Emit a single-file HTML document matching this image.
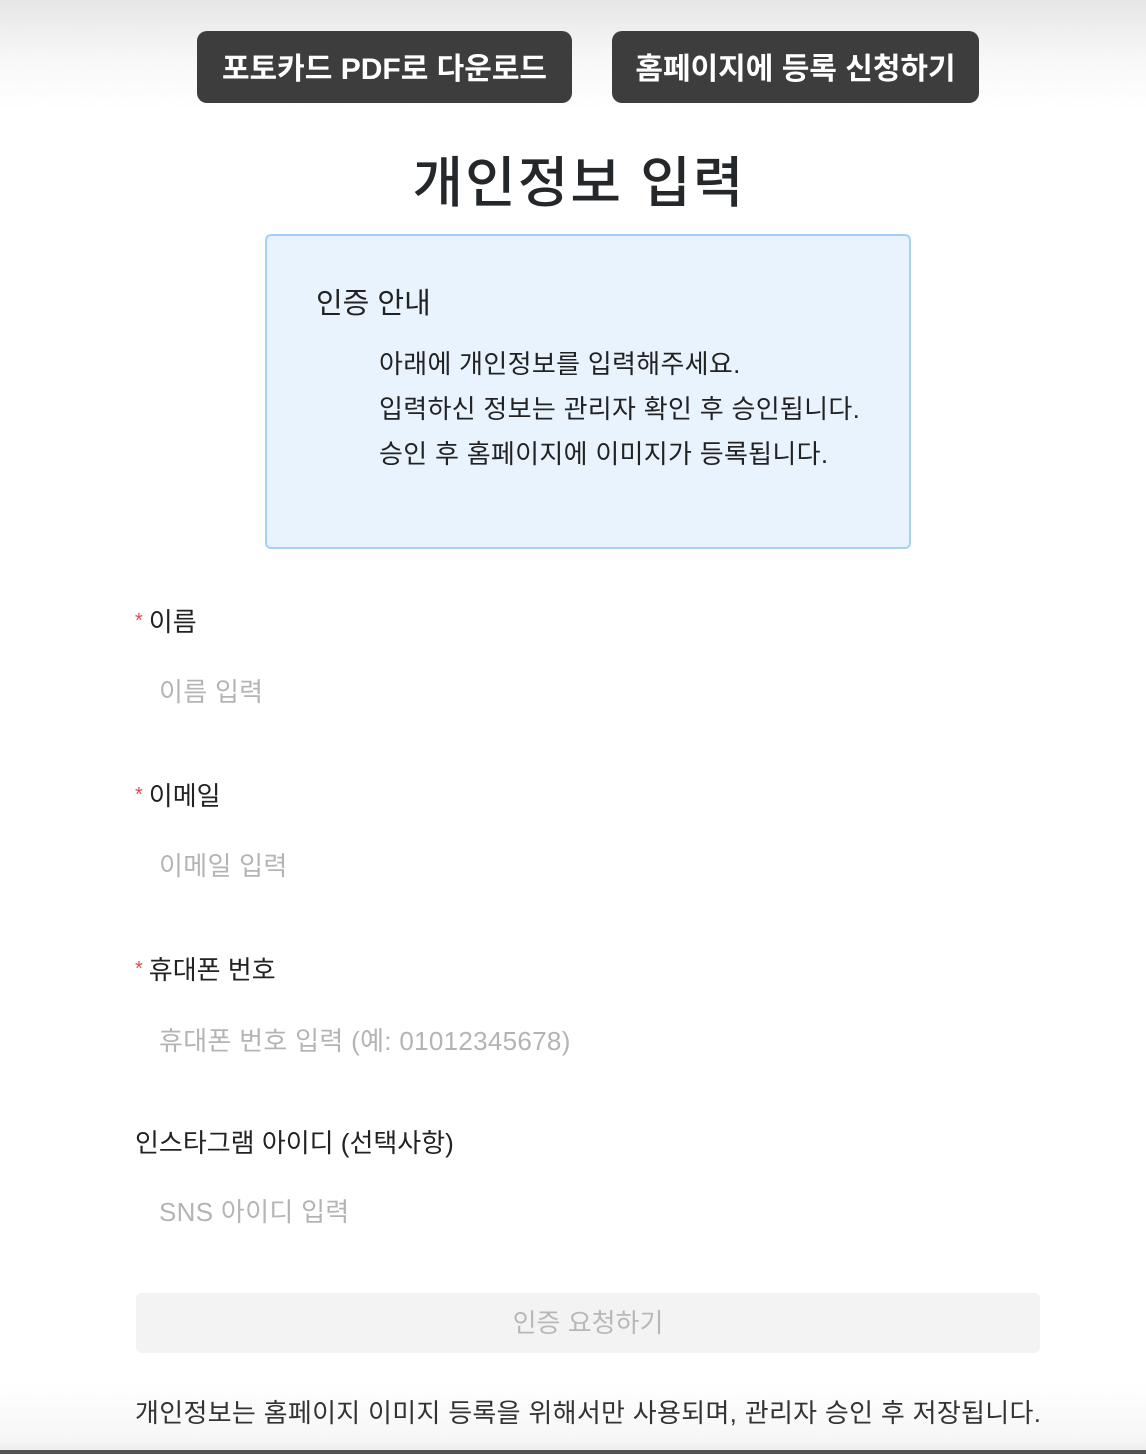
<!DOCTYPE html>
<html><head><meta charset="utf-8">
<style>
*{margin:0;padding:0;box-sizing:border-box}
html,body{width:1146px;height:1454px;overflow:hidden}
body{font-family:"Liberation Sans","Noto Sans CJK KR",sans-serif;color:#222;position:relative;
background:linear-gradient(#e6e6e6 0px,#f8f8f8 60px,#fff 110px,#fff 1380px,#f6f6f6 1440px,#eee 1450px);}
.btn{position:absolute;top:31px;height:72px;background:#3d3d3d;color:#fff;border-radius:10px;font-size:30px;font-weight:bold;display:flex;align-items:center;justify-content:center;letter-spacing:0;padding-bottom:3px}
h1{position:absolute;top:138px;left:6px;width:1146px;text-align:center;font-size:55px;font-weight:500;color:#25282b;letter-spacing:2px}
.box{position:absolute;left:265px;top:234px;width:646px;height:315px;background:#e8f3fe;border:2px solid #a6d0f8;border-radius:6px}
.box h3{position:absolute;left:49px;top:44px;font-size:29px;font-weight:normal}
.box p{position:absolute;left:112px;top:106px;font-size:26px;line-height:45px;color:#222;letter-spacing:0.3px}
.lbl{position:absolute;left:135px;font-size:26px;color:#222}
.lbl b{color:#e5484d;font-weight:normal;font-size:20px;margin-right:6px;position:relative;top:-4px}
.ph{position:absolute;left:159px;font-size:26px;color:#b4b4b4;letter-spacing:0.3px}
.sub{position:absolute;left:136px;top:1293px;width:904px;height:60px;background:#f3f3f3;border-radius:6px;color:#b8b8b8;font-size:26px;display:flex;align-items:center;justify-content:center;padding-bottom:3px}
.foot{position:absolute;left:135px;top:1393px;font-size:26px;color:#333;letter-spacing:0.3px}
.bar{position:absolute;left:0;top:1450px;width:1146px;height:4px;background:#555}
</style></head><body>
<div class="btn" style="left:197px;width:375px">포토카드 PDF로 다운로드</div>
<div class="btn" style="left:612px;width:367px">홈페이지에 등록 신청하기</div>
<h1>개인정보 입력</h1>
<div class="box"><h3>인증 안내</h3>
<p>아래에 개인정보를 입력해주세요.<br>입력하신 정보는 관리자 확인 후 승인됩니다.<br>승인 후 홈페이지에 이미지가 등록됩니다.</p></div>
<div class="lbl" style="top:602px"><b>*</b>이름</div>
<div class="ph" style="top:672px">이름 입력</div>
<div class="lbl" style="top:776px"><b>*</b>이메일</div>
<div class="ph" style="top:846px">이메일 입력</div>
<div class="lbl" style="top:950px"><b>*</b>휴대폰 번호</div>
<div class="ph" style="top:1021px">휴대폰 번호 입력 (예: 01012345678)</div>
<div class="lbl" style="top:1123px">인스타그램 아이디 (선택사항)</div>
<div class="ph" style="top:1192px">SNS 아이디 입력</div>
<div class="sub">인증 요청하기</div>
<div class="foot">개인정보는 홈페이지 이미지 등록을 위해서만 사용되며, 관리자 승인 후 저장됩니다.</div>
<div class="bar"></div>
</body></html>
